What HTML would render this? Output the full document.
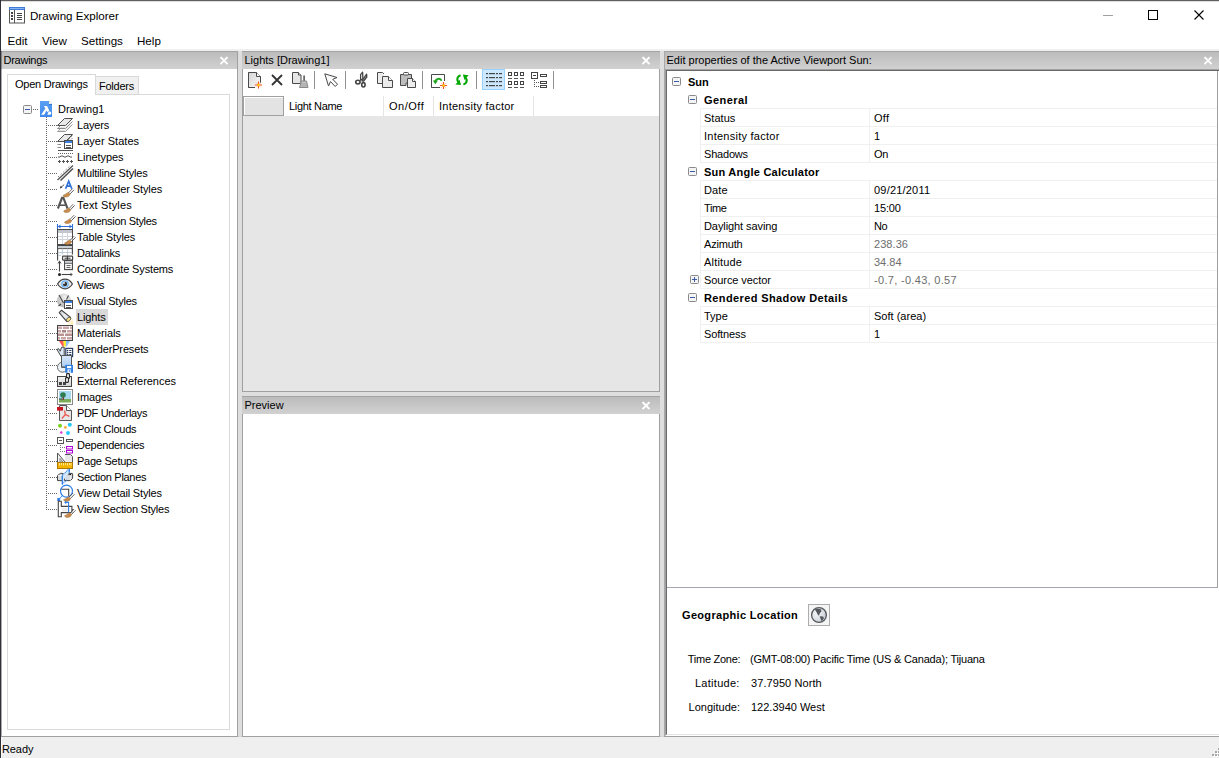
<!DOCTYPE html>
<html><head><meta charset="utf-8"><style>
*{margin:0;padding:0;box-sizing:border-box}
html,body{width:1219px;height:758px;overflow:hidden;background:#fff}
body{position:relative;font-family:"Liberation Sans",sans-serif;font-size:11px;color:#000}
.a{position:absolute}
.t{position:absolute;white-space:pre;line-height:16px}
.b{font-weight:bold}
.hdr{position:absolute;height:18px;border-top:1px solid #a3a3a3;background:linear-gradient(#bcbcbc,#d1d1d1)}
.hdr .t{left:2.5px;top:0px}
svg{position:absolute;overflow:visible}
</style></head><body>
<div class="a" style="left:0px;top:0px;width:1219px;height:1px;background:#606060"></div>
<div class="a" style="left:0px;top:1px;width:1219px;height:1px;background:#dcdcdc"></div>
<div class="a" style="left:0px;top:0px;width:1px;height:758px;background:#2e3236"></div>
<svg style="left:9px;top:7px" width="16" height="17" viewBox="0 0 16 17">
<rect x="0.5" y="0.5" width="15" height="15.5" fill="#fff" stroke="#555"/>
<rect x="0" y="0" width="16" height="3" fill="#3d7bd6"/>
<rect x="1" y="1" width="14" height="1" fill="#8ab4f0"/>
<line x1="5.5" y1="3" x2="5.5" y2="16" stroke="#555"/>
<rect x="2" y="5" width="2" height="2" fill="#444"/><rect x="2" y="8" width="2" height="2" fill="#444"/><rect x="2" y="11" width="2" height="2" fill="#444"/>
<rect x="8" y="6" width="5" height="1" fill="#444"/><rect x="8" y="8" width="5" height="1" fill="#444"/><rect x="8" y="10" width="5" height="1" fill="#444"/><rect x="8" y="12" width="5" height="1" fill="#444"/>
</svg>
<div class="t" style="left:30px;top:8px;font-size:11.6px">Drawing Explorer</div>
<div class="a" style="left:1103px;top:15px;width:10px;height:1px;background:#a0a0a0"></div>
<div class="a" style="left:1148px;top:10px;width:10px;height:10px;border:1px solid #000"></div>
<svg style="left:1194px;top:10px" width="10" height="10"><path d="M0.5 0.5L9.5 9.5M9.5 0.5L0.5 9.5" stroke="#000" stroke-width="1.1"/></svg>
<div class="t" style="left:7.5px;top:33px;font-size:11.6px">Edit</div>
<div class="t" style="left:42px;top:33px;font-size:11.6px">View</div>
<div class="t" style="left:81px;top:33px;font-size:11.6px">Settings</div>
<div class="t" style="left:137px;top:33px;font-size:11.6px">Help</div>
<div class="a" style="left:1px;top:49px;width:1218px;height:2px;background:#f0f0f0"></div>
<div class="a" style="left:1px;top:51px;width:1218px;height:685px;background:#dedede"></div>
<div class="a" style="left:1px;top:737px;width:1218px;height:21px;background:#efefef"></div>
<div class="a" style="left:1px;top:737px;width:1px;height:21px;background:#f8f8f8"></div>
<div class="a" style="left:1213px;top:755px;width:2px;height:2px;background:#fff"></div>
<div class="a" style="left:1212px;top:754px;width:2px;height:2px;background:#a8a8a8"></div>
<div class="a" style="left:1216px;top:755px;width:2px;height:2px;background:#fff"></div>
<div class="a" style="left:1215px;top:754px;width:2px;height:2px;background:#a8a8a8"></div>
<div class="a" style="left:1219px;top:755px;width:2px;height:2px;background:#fff"></div>
<div class="a" style="left:1218px;top:754px;width:2px;height:2px;background:#a8a8a8"></div>
<div class="a" style="left:1216px;top:752px;width:2px;height:2px;background:#fff"></div>
<div class="a" style="left:1215px;top:751px;width:2px;height:2px;background:#a8a8a8"></div>
<div class="a" style="left:1219px;top:752px;width:2px;height:2px;background:#fff"></div>
<div class="a" style="left:1218px;top:751px;width:2px;height:2px;background:#a8a8a8"></div>
<div class="a" style="left:1219px;top:749px;width:2px;height:2px;background:#fff"></div>
<div class="a" style="left:1218px;top:748px;width:2px;height:2px;background:#a8a8a8"></div>
<div class="t" style="left:2px;top:741px;letter-spacing:-0.1px">Ready</div>
<div class="a" style="left:1px;top:51px;width:237px;height:685px;background:#fff;border-right:1px solid #a0a0a0"></div>
<div class="hdr" style="left:1px;top:51px;width:236px"><div class="t" style="letter-spacing:-0.25px">Drawings</div></div>
<svg style="left:220px;top:57px" width="8" height="8" viewBox="0 0 8 8"><path d="M1.2 0.8L6.8 6.4M6.8 0.8L1.2 6.4" stroke="#fff" stroke-width="2" stroke-linecap="square"/></svg>
<div class="a" style="left:7px;top:94px;width:223px;height:636px;border:1px solid #d9d9d9;background:#fff"></div>
<div class="a" style="left:95px;top:76px;width:44px;height:19px;border:1px solid #d9d9d9;background:#f0f0f0"></div>
<div class="a" style="left:7px;top:74px;width:89px;height:21px;border:1px solid #d9d9d9;border-bottom:none;background:#fff"></div>
<div class="t" style="left:15px;top:76px;letter-spacing:-0.24px">Open Drawings</div>
<div class="t" style="left:99px;top:78px;letter-spacing:-0.25px">Folders</div>
<svg style="left:23px;top:105px" width="9" height="9" viewBox="0 0 9 9"><rect x="0.5" y="0.5" width="8" height="8" rx="1" fill="#f4f4f4" stroke="#8a8a8a"/><rect x="2" y="4" width="5" height="1" fill="#3b5ba8"/></svg>
<div class="a" style="left:33px;top:109px;width:5px;height:1px;background:repeating-linear-gradient(90deg,#666 0 1px,transparent 1px 2px)"></div>
<div class="a" style="left:46px;top:117px;width:1px;height:393px;background:repeating-linear-gradient(180deg,#666 0 1px,transparent 1px 2px)"></div>
<svg style="left:40px;top:101px" width="12" height="16" viewBox="0 0 12 16"><defs><linearGradient id="dwg" x1="0" y1="0" x2="0" y2="1"><stop offset="0" stop-color="#5b9ff2"/><stop offset="1" stop-color="#3f88ec"/></linearGradient></defs><path d="M0 0H9L12 3V16H0Z" fill="url(#dwg)"/><path d="M9 0L12 3H9Z" fill="#f4f0e6"/><rect x="9" y="3" width="3" height="1" fill="#2f78e0"/><path d="M3.9 5H7L9.3 9.6L7.6 11.2L6.4 9.4L4.3 13.8H1.1L5.4 7.6Z" fill="#fff"/><path d="M7.4 13.8L8.6 10.6H10C11.6 10.8 11.6 13.8 10 13.8Z" fill="#fff"/></svg>
<div class="t" style="left:58px;top:101px;">Drawing1</div>
<div class="a" style="left:47px;top:125px;width:10px;height:1px;background:repeating-linear-gradient(90deg,transparent 0 1px,#666 1px 2px)"></div>
<svg style="left:57px;top:117px" width="16" height="16" viewBox="0 0 16 16"><path d="M0.5 11.5L3 9M0.5 11.5H8.5L15.5 4.5" fill="none" stroke="#8a8a8a"/><path d="M0.5 14.5L3 12M0.5 14.5H8.5L15.5 7.5" fill="none" stroke="#9a9a9a"/><path d="M1.5 13.5H8L14 7.5M1.5 10.5H8L14 4.5" fill="none" stroke="#e0e0e0"/><path d="M7.5 1.5H15.5L8.5 8.5H0.5Z" fill="#e8e8e8" stroke="#505050"/></svg>
<div class="t" style="left:77px;top:117px;letter-spacing:-0.14px">Layers</div>
<div class="a" style="left:47px;top:141px;width:10px;height:1px;background:repeating-linear-gradient(90deg,transparent 0 1px,#666 1px 2px)"></div>
<svg style="left:57px;top:133px" width="16" height="16" viewBox="0 0 16 16"><path d="M7.5 1.5H15.5L8.5 8.5H0.5Z" fill="#e8e8e8" stroke="#505050"/><path fill="none" d="M11 7L15.5 2.5M13 7.5L15.5 5" stroke="#505050" stroke-dasharray="1 1"/><path fill="none" d="M0.5 11.5H4M0.5 14.5H4" stroke="#8a8a8a"/><rect x="7.5" y="7.5" width="8" height="8" fill="#fff" stroke="#4a4a4a"/><rect x="8" y="8" width="7" height="2" fill="#3b82e0"/><rect x="9" y="12" width="5" height="1" fill="#555"/><rect x="9" y="14" width="5" height="1" fill="#555"/></svg>
<div class="t" style="left:77px;top:133px;letter-spacing:0.027px">Layer States</div>
<div class="a" style="left:47px;top:157px;width:10px;height:1px;background:repeating-linear-gradient(90deg,transparent 0 1px,#666 1px 2px)"></div>
<svg style="left:57px;top:149px" width="16" height="16" viewBox="0 0 16 16"><rect x="1" y="1" width="15" height="1" fill="#555"/><rect x="1" y="4" width="1" height="1" fill="#666"/><rect x="3" y="4" width="1" height="1" fill="#666"/><rect x="5" y="4" width="1" height="1" fill="#666"/><rect x="7" y="4" width="1" height="1" fill="#666"/><rect x="9" y="4" width="1" height="1" fill="#666"/><rect x="11" y="4" width="1" height="1" fill="#666"/><rect x="13" y="4" width="1" height="1" fill="#666"/><rect x="15" y="4" width="1" height="1" fill="#666"/><path d="M1 8H3L4 7H6L7 8H9L10 7H12L13 8H15" fill="none" stroke="#555" stroke-width="1"/><rect x="1.0" y="12" width="3" height="1" fill="#555"/><rect x="2.0" y="11" width="1" height="3" fill="#555"/><rect x="5.0" y="12" width="3" height="1" fill="#555"/><rect x="6.0" y="11" width="1" height="3" fill="#555"/><rect x="9.0" y="12" width="3" height="1" fill="#555"/><rect x="10.0" y="11" width="1" height="3" fill="#555"/><rect x="13.0" y="12" width="3" height="1" fill="#555"/><rect x="14.0" y="11" width="1" height="3" fill="#555"/></svg>
<div class="t" style="left:77px;top:149px;letter-spacing:-0.062px">Linetypes</div>
<div class="a" style="left:47px;top:173px;width:10px;height:1px;background:repeating-linear-gradient(90deg,transparent 0 1px,#666 1px 2px)"></div>
<svg style="left:57px;top:165px" width="16" height="16" viewBox="0 0 16 16"><path fill="none" d="M0.5 15L16 0.5" stroke="#505050" stroke-width="1.2"/><path fill="none" d="M3.5 15.5L16 3.5" stroke="#505050" stroke-width="1.6"/><path fill="none" d="M1 12L14 0" stroke="#888" stroke-dasharray="1.5 2"/></svg>
<div class="t" style="left:77px;top:165px;letter-spacing:-0.18px">Multiline Styles</div>
<div class="a" style="left:47px;top:189px;width:10px;height:1px;background:repeating-linear-gradient(90deg,transparent 0 1px,#666 1px 2px)"></div>
<svg style="left:57px;top:181px" width="16" height="16" viewBox="0 0 16 16"><path d="M8.6 7.7L11.7 0.2L14.8 7.7M9.6 5.2H13.7" fill="none" stroke="#2f6fd8" stroke-width="1.7"/><path d="M3.5 6.8L7.2 3.6" stroke="#444" stroke-width="0.9" fill="none"/><path d="M2.8 7.5L3.6 4.8L5.4 6.6Z" fill="#444"/><g transform="translate(10,13.4) scale(1.0)"><path d="M1.4 -1.4L5.6 -5.8M2.8 -0.2L7 -4.6" stroke="#4a4a4a" stroke-width="0.9" fill="none"/><path d="M2.1 -0.8L6.3 -5.2" stroke="#fff" stroke-width="0.8" fill="none"/><path d="M-4 1C-2.6 0.4 -0.6 -0.8 1 -2L3 -0.4C2.8 1.8 0.8 2.6 -1.2 2.6C-2.6 2.6 -3.6 2 -4 1Z" fill="#c88c4c" stroke="#9c6a34" stroke-width="0.5"/></g></svg>
<div class="t" style="left:77px;top:181px;letter-spacing:-0.094px">Multileader Styles</div>
<div class="a" style="left:47px;top:205px;width:10px;height:1px;background:repeating-linear-gradient(90deg,transparent 0 1px,#666 1px 2px)"></div>
<svg style="left:57px;top:197px" width="16" height="16" viewBox="0 0 16 16"><path d="M0.9 11.5L5 0.8H6.4L10.5 11.5" fill="none" stroke="#555" stroke-width="2.1"/><path d="M2.8 8.2H8.6" stroke="#555" stroke-width="1.6"/><g transform="translate(10.6,13) scale(1.0)"><path d="M1.4 -1.4L5.6 -5.8M2.8 -0.2L7 -4.6" stroke="#4a4a4a" stroke-width="0.9" fill="none"/><path d="M2.1 -0.8L6.3 -5.2" stroke="#fff" stroke-width="0.8" fill="none"/><path d="M-4 1C-2.6 0.4 -0.6 -0.8 1 -2L3 -0.4C2.8 1.8 0.8 2.6 -1.2 2.6C-2.6 2.6 -3.6 2 -4 1Z" fill="#c88c4c" stroke="#9c6a34" stroke-width="0.5"/></g></svg>
<div class="t" style="left:77px;top:197px;letter-spacing:0.15px">Text Styles</div>
<div class="a" style="left:47px;top:221px;width:10px;height:1px;background:repeating-linear-gradient(90deg,transparent 0 1px,#666 1px 2px)"></div>
<svg style="left:57px;top:213px" width="16" height="16" viewBox="0 0 16 16"><g transform="translate(11.5,8) scale(1.0)"><path d="M1.4 -1.4L5.6 -5.8M2.8 -0.2L7 -4.6" stroke="#4a4a4a" stroke-width="0.9" fill="none"/><path d="M2.1 -0.8L6.3 -5.2" stroke="#fff" stroke-width="0.8" fill="none"/><path d="M-4 1C-2.6 0.4 -0.6 -0.8 1 -2L3 -0.4C2.8 1.8 0.8 2.6 -1.2 2.6C-2.6 2.6 -3.6 2 -4 1Z" fill="#c88c4c" stroke="#9c6a34" stroke-width="0.5"/></g><path fill="none" d="M0.5 11V16M15.5 11V16M1 13.5H15" stroke="#2f6fd8" stroke-width="1.1"/><path d="M1 13.5L3.5 11.5V15.5Z M15 13.5L12.5 11.5V15.5Z" fill="#2f6fd8"/></svg>
<div class="t" style="left:77px;top:213px;letter-spacing:-0.333px">Dimension Styles</div>
<div class="a" style="left:47px;top:237px;width:10px;height:1px;background:repeating-linear-gradient(90deg,transparent 0 1px,#666 1px 2px)"></div>
<svg style="left:57px;top:229px" width="16" height="16" viewBox="0 0 16 16"><rect x="0.5" y="0.5" width="15" height="15" fill="#fff" stroke="#4a4a4a"/><rect x="1" y="1" width="14" height="3" fill="#c2c6cc"/><path fill="none" d="M1 7.5H15M1 10.5H15M5.5 4V15M10.5 4V15" stroke="#cfd6de"/><g transform="translate(11.5,13) scale(1.0)"><path d="M1.4 -1.4L5.6 -5.8M2.8 -0.2L7 -4.6" stroke="#4a4a4a" stroke-width="0.9" fill="none"/><path d="M2.1 -0.8L6.3 -5.2" stroke="#fff" stroke-width="0.8" fill="none"/><path d="M-4 1C-2.6 0.4 -0.6 -0.8 1 -2L3 -0.4C2.8 1.8 0.8 2.6 -1.2 2.6C-2.6 2.6 -3.6 2 -4 1Z" fill="#c88c4c" stroke="#9c6a34" stroke-width="0.5"/></g></svg>
<div class="t" style="left:77px;top:229px;letter-spacing:-0.091px">Table Styles</div>
<div class="a" style="left:47px;top:253px;width:10px;height:1px;background:repeating-linear-gradient(90deg,transparent 0 1px,#666 1px 2px)"></div>
<svg style="left:57px;top:245px" width="16" height="16" viewBox="0 0 16 16"><path d="M0.6 15.4V0.6H15.4V9.4" fill="#fff" stroke="#444" stroke-width="1.1"/><rect x="1.1" y="1.1" width="13.8" height="2.4" fill="#c9d1d6"/><path d="M1 3.6H15" stroke="#444" stroke-width="0.9"/><path d="M1 7.5H15M5.3 3.6V9.6M10.5 3.6V9.6M1 10.5H4" stroke="#b9c6d2" stroke-width="0.9"/><rect x="5.6" y="11.2" width="5.2" height="4" rx="0.6" fill="#fff" stroke="#444" stroke-width="1.2"/><rect x="10.4" y="11.2" width="5.2" height="4" rx="0.6" fill="#fff" stroke="#444" stroke-width="1.2"/><path d="M7.5 13.2H13.5" stroke="#444" stroke-width="1.1"/></svg>
<div class="t" style="left:77px;top:245px;letter-spacing:-0.237px">Datalinks</div>
<div class="a" style="left:47px;top:269px;width:10px;height:1px;background:repeating-linear-gradient(90deg,transparent 0 1px,#666 1px 2px)"></div>
<svg style="left:57px;top:261px" width="16" height="16" viewBox="0 0 16 16"><rect x="7.6" y="-0.6" width="7.8" height="9.2" fill="#fff" stroke="#444" stroke-width="1.1"/><rect x="8.2" y="0" width="6.6" height="2" fill="#c9d1d6"/><path d="M8 2.4H15" stroke="#444" stroke-width="0.8"/><path d="M9.5 4.6H13.5M9.5 6.6H13.5" stroke="#444" stroke-width="0.9"/><path d="M2.5 10.5V0.5" stroke="#444" stroke-width="1.1"/><path d="M0.3 2.8L2.5 -0.4L4.7 2.8L2.5 1.8Z" fill="#444"/><circle cx="2.5" cy="13.5" r="1.5" fill="#222"/><path d="M4.6 13.5H14" stroke="#444" stroke-width="1.1"/><path d="M13.2 11.6L15.8 13.5L13.2 15.4L14 13.5Z" fill="#444"/></svg>
<div class="t" style="left:77px;top:261px;letter-spacing:-0.159px">Coordinate Systems</div>
<div class="a" style="left:47px;top:285px;width:10px;height:1px;background:repeating-linear-gradient(90deg,transparent 0 1px,#666 1px 2px)"></div>
<svg style="left:57px;top:277px" width="16" height="16" viewBox="0 0 16 16"><path d="M0.6 7C3 3.2 5.5 2.2 8 2.2C10.5 2.2 13 3.2 15.4 7C13 10.8 10.5 11.8 8 11.8C5.5 11.8 3 10.8 0.6 7Z" fill="#f4f4f4" stroke="#444" stroke-width="1.3"/><path d="M2.5 7L4 5.5V8.5Z M13.5 7L12 5.5V8.5Z" fill="#ddd"/><circle cx="8" cy="7" r="3.2" fill="#fff" stroke="#6ab0f5" stroke-width="1.3"/><circle cx="8" cy="7" r="2.2" fill="#333"/><circle cx="7" cy="6" r="0.9" fill="#fff"/></svg>
<div class="t" style="left:77px;top:277px;letter-spacing:-0.425px">Views</div>
<div class="a" style="left:47px;top:301px;width:10px;height:1px;background:repeating-linear-gradient(90deg,transparent 0 1px,#666 1px 2px)"></div>
<svg style="left:57px;top:293px" width="16" height="16" viewBox="0 0 16 16"><defs><radialGradient id="vsg" cx="0.6" cy="0.3" r="0.9"><stop offset="0" stop-color="#f2f2f2"/><stop offset="1" stop-color="#a8a8a8"/></radialGradient></defs><circle cx="7" cy="7.5" r="7" fill="url(#vsg)"/><path d="M2 2L6.5 10M11.5 2.5L9.5 6.5M1.5 13L4 11" stroke="#444" stroke-width="1.1" fill="none"/><rect x="7.5" y="7.5" width="8" height="8" fill="#fff" stroke="#4a4a4a"/><rect x="8" y="8" width="7" height="2" fill="#3b82e0"/><rect x="9" y="12" width="5" height="1" fill="#555"/><rect x="9" y="14" width="5" height="1" fill="#555"/></svg>
<div class="t" style="left:77px;top:293px;letter-spacing:-0.225px">Visual Styles</div>
<div class="a" style="left:47px;top:317px;width:10px;height:1px;background:repeating-linear-gradient(90deg,transparent 0 1px,#666 1px 2px)"></div>
<div class="a" style="left:76px;top:309px;width:32px;height:16px;background:#d9d9d9"></div>
<svg style="left:57px;top:309px" width="16" height="16" viewBox="0 0 16 16"><defs><linearGradient id="lg" x1="0" y1="0" x2="1" y2="1"><stop offset="0" stop-color="#c8ccd0"/><stop offset="0.5" stop-color="#eef0f2"/><stop offset="1" stop-color="#b8bcc0"/></linearGradient><linearGradient id="lgg" x1="0" y1="0" x2="1" y2="1"><stop offset="0" stop-color="#fff" stop-opacity="0"/><stop offset="1" stop-color="#fde08a"/></linearGradient></defs><rect x="10" y="9" width="6" height="6.5" fill="url(#lgg)"/><path d="M4.5 1.2L2.2 3.6L9.6 12.4L13.6 8.4Z" fill="url(#lg)" stroke="#444" stroke-width="1.1" stroke-linejoin="round"/><ellipse cx="11.6" cy="10.4" rx="2.6" ry="1.6" transform="rotate(-45 11.6 10.4)" fill="#ffe57a" stroke="#555" stroke-width="0.9"/></svg>
<div class="t" style="left:77px;top:309px;letter-spacing:-0.14px">Lights</div>
<div class="a" style="left:47px;top:333px;width:10px;height:1px;background:repeating-linear-gradient(90deg,transparent 0 1px,#666 1px 2px)"></div>
<svg style="left:57px;top:325px" width="16" height="16" viewBox="0 0 16 16"><rect x="0.5" y="0.5" width="15" height="15" fill="#fff" stroke="#444"/><g fill="#c9a6a6"><rect x="1" y="1.5" width="4" height="2.5"/><rect x="6" y="1.5" width="6" height="2.5"/><rect x="13" y="1.5" width="2" height="2.5"/><rect x="1" y="5" width="3" height="2.5"/><rect x="5" y="5" width="4" height="2.5" fill="#a98282"/><rect x="10" y="5" width="5" height="2.5"/><rect x="1" y="8.5" width="6" height="2.5" fill="#b99292"/><rect x="8" y="8.5" width="7" height="2.5" fill="#b99292"/><rect x="1" y="12" width="2" height="2.5"/><rect x="4" y="12" width="5" height="2.5"/><rect x="10" y="12" width="5" height="2.5"/></g></svg>
<div class="t" style="left:77px;top:325px;letter-spacing:-0.112px">Materials</div>
<div class="a" style="left:47px;top:349px;width:10px;height:1px;background:repeating-linear-gradient(90deg,transparent 0 1px,#666 1px 2px)"></div>
<svg style="left:57px;top:341px" width="16" height="16" viewBox="0 0 16 16"><path d="M2 0H6.6L7 5.6L5.6 5.6Z" fill="#ff5a5a"/><path d="M6.4 0H9.2L8.9 5.6H6.8Z" fill="#fff12a"/><path d="M9 0H13L9.8 5.6H8.8Z" fill="#8cc0fa"/><path d="M0 8.5L1.6 7.6L3.2 10.2L4.6 6.2H7.2V15.6H4.2Z" fill="#dce9f8" stroke="#444" stroke-width="1" stroke-linejoin="round"/><rect x="8.8" y="7.4" width="6.8" height="8.2" fill="#fff" stroke="#2c4066" stroke-width="1.2"/><g fill="#2c4066"><circle cx="10.6" cy="9.5" r="0.8"/><circle cx="10.6" cy="11.5" r="0.8"/><circle cx="10.6" cy="13.5" r="0.8"/><rect x="12.2" y="9" width="2.2" height="1"/><rect x="12.2" y="11" width="2.2" height="1"/><rect x="12.2" y="13" width="2.2" height="1"/></g></svg>
<div class="t" style="left:77px;top:341px;letter-spacing:-0.15px">RenderPresets</div>
<div class="a" style="left:47px;top:365px;width:10px;height:1px;background:repeating-linear-gradient(90deg,transparent 0 1px,#666 1px 2px)"></div>
<svg style="left:57px;top:357px" width="16" height="16" viewBox="0 0 16 16"><defs><linearGradient id="blg" x1="0" y1="0" x2="0" y2="1"><stop offset="0" stop-color="#d8e8fb"/><stop offset="1" stop-color="#a9ccf4"/></linearGradient></defs><path d="M5 5.2A5 5 0 1 0 10.5 10.2" fill="#eef4fb" stroke="#666"/><path d="M4.5 -1.5H14.5V10.2H4.5Z" fill="url(#blg)" stroke="#555"/><path d="M4.5 10.2H9" stroke="#555"/><rect x="8.2" y="7.9" width="7.8" height="7.9" fill="#2f7fe6"/><rect x="10" y="9" width="4.2" height="2.2" fill="#fff"/><rect x="10.5" y="12.3" width="3.2" height="3.5" fill="#fff"/><rect x="11.8" y="12.8" width="1" height="2" fill="#2f7fe6"/></svg>
<div class="t" style="left:77px;top:357px;letter-spacing:-0.54px">Blocks</div>
<div class="a" style="left:47px;top:381px;width:10px;height:1px;background:repeating-linear-gradient(90deg,transparent 0 1px,#666 1px 2px)"></div>
<svg style="left:57px;top:373px" width="16" height="16" viewBox="0 0 16 16"><defs><linearGradient id="xrg" x1="0" y1="0" x2="0" y2="1"><stop offset="0" stop-color="#f4f4f4"/><stop offset="1" stop-color="#d4d4d4"/></linearGradient></defs><rect x="0.5" y="3.5" width="14" height="10" fill="url(#xrg)" stroke="#444"/><rect x="2" y="9" width="3" height="3" fill="#444"/><rect x="6" y="9" width="3" height="3" fill="#444"/><rect x="9.6" y="0.6" width="2.8" height="5" rx="0.8" fill="#fff" stroke="#222" stroke-width="1.1"/><rect x="8.6" y="4.6" width="2.8" height="4.8" rx="0.8" fill="#fff" stroke="#222" stroke-width="1.1"/></svg>
<div class="t" style="left:77px;top:373px;letter-spacing:-0.039px">External References</div>
<div class="a" style="left:47px;top:397px;width:10px;height:1px;background:repeating-linear-gradient(90deg,transparent 0 1px,#666 1px 2px)"></div>
<svg style="left:57px;top:389px" width="16" height="16" viewBox="0 0 16 16"><rect x="0.5" y="0.5" width="15" height="15" fill="#fff" stroke="#888"/><rect x="2" y="2" width="12" height="8" fill="#a8d8f0"/><rect x="2" y="10" width="12" height="3.5" fill="#7cab57"/><circle cx="6" cy="6" r="2.8" fill="#2e7d4f"/><rect x="5.5" y="8" width="1.5" height="3" fill="#7a3a3a"/><rect x="2" y="9.5" width="3" height="1" fill="#2e4a5a"/></svg>
<div class="t" style="left:77px;top:389px;letter-spacing:-0.14px">Images</div>
<div class="a" style="left:47px;top:413px;width:10px;height:1px;background:repeating-linear-gradient(90deg,transparent 0 1px,#666 1px 2px)"></div>
<svg style="left:57px;top:405px" width="16" height="16" viewBox="0 0 16 16"><path d="M2.5 0.5H9.5L14.5 5.5V15.5H2.5Z" fill="#e6e6e6" stroke="#555"/><path d="M9.5 0.5V5.5H14.5" fill="#fff" stroke="#555"/><rect x="0" y="2" width="6" height="3.6" fill="#c8141e"/><path d="M7.6 5.5L8.3 9.5L4.8 13.6M8.3 9.5L12.4 11.4" fill="none" stroke="#f0504a" stroke-width="1.3"/></svg>
<div class="t" style="left:77px;top:405px;letter-spacing:-0.342px">PDF Underlays</div>
<div class="a" style="left:47px;top:429px;width:10px;height:1px;background:repeating-linear-gradient(90deg,transparent 0 1px,#666 1px 2px)"></div>
<svg style="left:57px;top:421px" width="16" height="16" viewBox="0 0 16 16"><circle cx="3" cy="4.7" r="2" fill="#7ed321"/><circle cx="12.8" cy="3.8" r="2" fill="#22c8fa"/><circle cx="8.4" cy="6.4" r="1.3" fill="#f5a623"/><circle cx="4.3" cy="11.5" r="1.2" fill="#ea2ad6"/><circle cx="11" cy="12" r="1.9" fill="#22c8fa"/></svg>
<div class="t" style="left:77px;top:421px;letter-spacing:-0.255px">Point Clouds</div>
<div class="a" style="left:47px;top:445px;width:10px;height:1px;background:repeating-linear-gradient(90deg,transparent 0 1px,#666 1px 2px)"></div>
<svg style="left:57px;top:437px" width="16" height="16" viewBox="0 0 16 16"><rect x="0.5" y="0.5" width="6" height="6" fill="#fff" stroke="#555"/><rect x="2" y="3" width="3" height="1" fill="#555"/><rect x="9.5" y="2.5" width="6" height="2" fill="#fff" stroke="#555"/><rect x="3" y="8" width="1" height="1" fill="#777"/><rect x="3" y="10" width="1" height="1" fill="#777"/><rect x="3" y="12" width="1" height="1" fill="#777"/><rect x="3" y="14" width="1" height="1" fill="#777"/><rect x="5" y="10" width="1" height="1" fill="#777"/><rect x="5" y="14" width="1" height="1" fill="#777"/><rect x="7" y="10" width="1" height="1" fill="#777"/><rect x="7" y="14" width="1" height="1" fill="#777"/><rect x="9.5" y="9.5" width="6" height="2.5" fill="#fff" stroke="#b000d8"/><rect x="9.5" y="13.5" width="6" height="2.5" fill="#fff" stroke="#b000d8"/></svg>
<div class="t" style="left:77px;top:437px;letter-spacing:-0.255px">Dependencies</div>
<div class="a" style="left:47px;top:461px;width:10px;height:1px;background:repeating-linear-gradient(90deg,transparent 0 1px,#666 1px 2px)"></div>
<svg style="left:57px;top:453px" width="16" height="16" viewBox="0 0 16 16"><path d="M0.5 0L8 9V9.5H0.5Z" fill="#f5f5f5" stroke="#555"/><path d="M3 5.5V9H6Z" fill="#fff" stroke="#555" stroke-width="0.7"/><path d="M8 1.5H13.5L15.5 3.5V9.5H8" fill="#e8e8e8" stroke="#555"/><rect x="0.5" y="9.5" width="15" height="6" fill="#f5b400" stroke="#b07a00"/><path fill="none" d="M2.5 10V12.5M4.5 10V12M6.5 10V12.5M8.5 10V12M10.5 10V12.5M12.5 10V12M14 10V12.5" stroke="#fff3b0" stroke-width="0.8"/></svg>
<div class="t" style="left:77px;top:453px;letter-spacing:-0.26px">Page Setups</div>
<div class="a" style="left:47px;top:477px;width:10px;height:1px;background:repeating-linear-gradient(90deg,transparent 0 1px,#666 1px 2px)"></div>
<svg style="left:57px;top:469px" width="16" height="16" viewBox="0 0 16 16"><path d="M0.5 6.6L3.4 4.4H6V11.6H0.5Z" fill="#d9dde1" stroke="#444" stroke-width="1"/><path d="M1 6.6H5.5" stroke="#f4f4f4"/><path d="M7.4 6.6L10 4.4H15.6V9.4L13.4 11.6H7.4Z" fill="#d9dde1" stroke="#444" stroke-width="1"/><path d="M8 6.6H13.4L15.4 4.6M13.4 6.6V11.4" stroke="#f0f0f0" stroke-width="0.8"/><path d="M5.3 15.4V6.4L12.2 -0.2V3.8L7 10.2V13.2Z" fill="#d3e7fb"/><path d="M5.3 15.4V6.4" stroke="#2f7fe6" stroke-width="1.3"/><path d="M5.3 6.4L12.2 -0.2" stroke="#2f7fe6" stroke-width="1.1" stroke-dasharray="1 0.8"/><path d="M12.3 -0.2V3.8" stroke="#2f7fe6" stroke-width="1.3"/><path d="M5.3 15.4L9.8 11" stroke="#2f7fe6" stroke-width="1.1" stroke-dasharray="1 0.8"/></svg>
<div class="t" style="left:77px;top:469px;letter-spacing:-0.3px">Section Planes</div>
<div class="a" style="left:47px;top:493px;width:10px;height:1px;background:repeating-linear-gradient(90deg,transparent 0 1px,#666 1px 2px)"></div>
<svg style="left:57px;top:485px" width="16" height="16" viewBox="0 0 16 16"><circle cx="9.5" cy="6.1" r="6" fill="none" stroke="#2f7fe6" stroke-width="1.2"/><path d="M4.3 4.2H11.7V11" fill="none" stroke="#444" stroke-width="1.1"/><path d="M5 11.2L2.6 13.6" stroke="#2f7fe6" stroke-width="1.1" stroke-dasharray="1 0.8"/><rect x="0.3" y="13" width="2.8" height="3" fill="#2f7fe6"/><g transform="translate(10.5,13.8) scale(1.0)"><path d="M1.4 -1.4L5.6 -5.8M2.8 -0.2L7 -4.6" stroke="#4a4a4a" stroke-width="0.9" fill="none"/><path d="M2.1 -0.8L6.3 -5.2" stroke="#fff" stroke-width="0.8" fill="none"/><path d="M-4 1C-2.6 0.4 -0.6 -0.8 1 -2L3 -0.4C2.8 1.8 0.8 2.6 -1.2 2.6C-2.6 2.6 -3.6 2 -4 1Z" fill="#c88c4c" stroke="#9c6a34" stroke-width="0.5"/></g></svg>
<div class="t" style="left:77px;top:485px;letter-spacing:-0.171px">View Detail Styles</div>
<div class="a" style="left:47px;top:509px;width:10px;height:1px;background:repeating-linear-gradient(90deg,transparent 0 1px,#666 1px 2px)"></div>
<svg style="left:57px;top:501px" width="16" height="16" viewBox="0 0 16 16"><path d="M1.3 0.3H4.3V5.4H14.9V11.6H4.3V15.7H1.3Z" fill="#fff" stroke="#444" stroke-width="1.1"/><rect x="4.6" y="7" width="7" height="3.5" fill="#eeeeee"/><path d="M11.6 11.6V1.4H8.4" fill="none" stroke="#2f7fe6" stroke-width="1.1"/><path d="M7.2 1.4L9.2 -0.4V3.2Z" fill="#2f7fe6"/><path d="M15 8L16 9L15 10" fill="none" stroke="#444" stroke-width="0.8"/><g transform="translate(11.5,13.8) scale(1.0)"><path d="M1.4 -1.4L5.6 -5.8M2.8 -0.2L7 -4.6" stroke="#4a4a4a" stroke-width="0.9" fill="none"/><path d="M2.1 -0.8L6.3 -5.2" stroke="#fff" stroke-width="0.8" fill="none"/><path d="M-4 1C-2.6 0.4 -0.6 -0.8 1 -2L3 -0.4C2.8 1.8 0.8 2.6 -1.2 2.6C-2.6 2.6 -3.6 2 -4 1Z" fill="#c88c4c" stroke="#9c6a34" stroke-width="0.5"/></g></svg>
<div class="t" style="left:77px;top:501px;letter-spacing:-0.217px">View Section Styles</div>
<div class="a" style="left:242px;top:51px;width:418px;height:341px;background:#e6e6e6;border:1px solid #a0a0a0;border-top:none"></div>
<div class="hdr" style="left:242px;top:51px;width:418px"><div class="t">Lights [Drawing1]</div></div>
<svg style="left:642px;top:57px" width="8" height="8" viewBox="0 0 8 8"><path d="M1.2 0.8L6.8 6.4M6.8 0.8L1.2 6.4" stroke="#fff" stroke-width="2" stroke-linecap="square"/></svg>
<div class="a" style="left:243px;top:69px;width:416px;height:27px;background:#fff"></div>
<div class="a" style="left:243px;top:96px;width:416px;height:20px;background:#fff"></div>
<div class="a" style="left:314px;top:71px;width:1px;height:18px;background:#8f8f8f"></div>
<div class="a" style="left:345px;top:71px;width:1px;height:18px;background:#8f8f8f"></div>
<div class="a" style="left:422px;top:71px;width:1px;height:18px;background:#8f8f8f"></div>
<div class="a" style="left:476px;top:71px;width:1px;height:18px;background:#8f8f8f"></div>
<div class="a" style="left:553px;top:71px;width:1px;height:18px;background:#8f8f8f"></div>
<svg style="left:248px;top:72px" width="16" height="17" viewBox="0 0 16 17"><defs><linearGradient id="dg" x1="0" y1="0" x2="1" y2="1"><stop offset="0" stop-color="#d5d5d5"/><stop offset="1" stop-color="#fbfbfb"/></linearGradient></defs><path d="M0.5 0.5H8.5L12.5 4.5V11M7 15.5H0.5Z" fill="url(#dg)" stroke="#4a4a4a"/><path d="M0.5 0.5H8.5L12.5 4.5V11L7 15.5H0.5Z" fill="url(#dg)"/><path d="M0.5 15.5V0.5H8.5L12.5 4.5V10.5M7 15.5H0.5" fill="none" stroke="#4a4a4a"/><path d="M8.5 0.5V4.5H12.5" fill="#fff" stroke="#4a4a4a"/><g transform="translate(10.5,13)"><path fill="none" d="M0 -3.6V3.6M-3.6 0H3.6" stroke="#f0501e" stroke-width="1.1"/><path fill="none" d="M-2.3 -2.3L2.3 2.3M2.3 -2.3L-2.3 2.3" stroke="#f0501e" stroke-width="0.7" opacity="0.55"/><circle r="1.2" fill="#ffd000"/></g></svg>
<svg style="left:271px;top:74px" width="12" height="12" viewBox="0 0 12 12"><path fill="none" d="M1 1L11 11M11 1L1 11" stroke="#333" stroke-width="1.8"/></svg>
<svg style="left:292px;top:72px" width="17" height="17" viewBox="0 0 17 17"><path d="M0.5 0.5H6.5L9 3V11.5H0.5Z" fill="#e6e6e6" stroke="#4a4a4a"/><path d="M6.5 0.5V3H9" fill="#fff" stroke="#4a4a4a"/><rect x="11.3" y="3.5" width="1.6" height="6" fill="#5a5a5a"/><path d="M9.5 9H14.5L16 15.5H7.5Z" fill="#c4c4c4" stroke="#8a8a8a"/><path d="M10 11V15M12 11V15M14 11V15" stroke="#9a9a9a" stroke-width="0.7"/></svg>
<svg style="left:324px;top:73px" width="15" height="15" viewBox="0 0 15 15"><path d="M0.8 0.8L13 4.5L8.8 6.3L13.5 11.2L11.2 13.5L6.5 8.6L4.5 13Z" fill="#fafafa" stroke="#4a4a4a" stroke-width="1" stroke-linejoin="round"/></svg>
<svg style="left:352px;top:70px" width="20" height="20" viewBox="0 0 20 20"><path d="M8.6 10.2V4.6L10.6 2.2L10.9 8.8Z" fill="#fff" stroke="#444" stroke-width="1.3" stroke-linejoin="round"/><path d="M10 10.8L14.6 4.2L14.8 7L11.6 11.2Z" fill="#d8d8d8" stroke="#444" stroke-width="1.3" stroke-linejoin="round"/><ellipse cx="5.9" cy="12.1" rx="2.2" ry="1.9" fill="none" stroke="#444" stroke-width="1.6"/><ellipse cx="11.4" cy="14.8" rx="1.7" ry="2.2" fill="none" stroke="#444" stroke-width="1.6"/></svg>
<svg style="left:377px;top:72px" width="16" height="16" viewBox="0 0 16 16"><path d="M0.5 11.5V0.5H5.5L7 2" fill="none" stroke="#4a4a4a"/><path d="M1 1H5L7 3V11H1Z" fill="#ececec"/><path fill="none" d="M0.5 11.5H5" stroke="#4a4a4a"/><path d="M5.5 4.5H11.5L15.5 8.5V15.5H5.5Z" fill="#ececec" stroke="#4a4a4a"/><path d="M11.5 4.5V8.5H15.5" fill="#fff" stroke="#4a4a4a"/></svg>
<svg style="left:400px;top:72px" width="16" height="16" viewBox="0 0 16 16"><path d="M0.5 2.5H11.5V11H6V13.5H0.5Z" fill="#bdbdbd" stroke="#4a4a4a"/><rect x="3.5" y="0.5" width="5" height="2.5" rx="1" fill="#fff" stroke="#4a4a4a"/><path d="M7.5 6.5H12.5L15.5 9.5V15.5H7.5Z" fill="#ececec" stroke="#4a4a4a"/><path d="M12.5 6.5V9.5H15.5" fill="#fff" stroke="#4a4a4a"/></svg>
<svg style="left:431px;top:74px" width="17" height="16" viewBox="0 0 17 16"><path d="M0.5 13.5V0.5H13.5V7" fill="none" stroke="#4a4a4a"/><path fill="none" d="M0.5 13.5H9" stroke="#4a4a4a"/><path fill="none" d="M0.5 13.5H9" stroke="#4a4a4a"/><path d="M4.5 7.5C4.5 4.5 9.5 3.5 10.5 6.8" fill="none" stroke="#1aa31a" stroke-width="1.8"/><path d="M1.8 6.5H7L4.3 10.2Z" fill="#1aa31a"/><g transform="translate(12.5,11.5)"><path fill="none" d="M0 -3.6V3.6M-3.6 0H3.6" stroke="#f0501e" stroke-width="1.1"/><path fill="none" d="M-2.3 -2.3L2.3 2.3M2.3 -2.3L-2.3 2.3" stroke="#f0501e" stroke-width="0.7" opacity="0.55"/><circle r="1.2" fill="#ffd000"/></g></svg>
<svg style="left:452px;top:72px" width="20" height="16" viewBox="0 0 20 16"><path d="M8.6 3.2C5.5 4 4.3 7.5 6.2 10" fill="none" stroke="#00a800" stroke-width="2.1"/><path d="M3.4 12.6L9 12.9L7.6 7.8Z" fill="#00a800"/><path d="M11.4 12.6C14.5 11.8 15.7 8.3 13.8 5.8" fill="none" stroke="#00a800" stroke-width="2.1"/><path d="M10.9 2.4L16.6 3.2L12.4 7.9Z" fill="#00a800"/></svg>
<div class="a" style="left:482px;top:69px;width:23px;height:21px;background:#cce8ff;border:1px solid #99d1ff"></div>
<svg style="left:482px;top:69px" width="23" height="21" viewBox="0 0 23 21"><rect x="4" y="4" width="2" height="1.2" fill="#444"/><rect x="7" y="4" width="6" height="1.2" fill="#444"/><rect x="14" y="4" width="2" height="1.2" fill="#444"/><rect x="17" y="4" width="3" height="1.2" fill="#444"/><rect x="4" y="5.2" width="16" height="0.8" fill="#b8c8d8" opacity="0.6"/><rect x="4" y="8" width="2" height="1.2" fill="#444"/><rect x="7" y="8" width="6" height="1.2" fill="#444"/><rect x="14" y="8" width="2" height="1.2" fill="#444"/><rect x="17" y="8" width="3" height="1.2" fill="#444"/><rect x="4" y="9.2" width="16" height="0.8" fill="#b8c8d8" opacity="0.6"/><rect x="4" y="12" width="2" height="1.2" fill="#444"/><rect x="7" y="12" width="6" height="1.2" fill="#444"/><rect x="14" y="12" width="2" height="1.2" fill="#444"/><rect x="17" y="12" width="3" height="1.2" fill="#444"/><rect x="4" y="13.2" width="16" height="0.8" fill="#b8c8d8" opacity="0.6"/><rect x="4" y="16" width="2" height="1.2" fill="#444"/><rect x="7" y="16" width="6" height="1.2" fill="#444"/><rect x="14" y="16" width="2" height="1.2" fill="#444"/><rect x="17" y="16" width="3" height="1.2" fill="#444"/><rect x="4" y="17.2" width="16" height="0.8" fill="#b8c8d8" opacity="0.6"/></svg>
<svg style="left:508px;top:69px" width="18" height="21" viewBox="0 0 18 21"><path d="M0 3h4v4h-4zM1 4v2h2v-2z" fill="#444" fill-rule="evenodd"/><rect x="0" y="9" width="4" height="1" fill="#555"/><path d="M6 3h4v4h-4zM7 4v2h2v-2z" fill="#444" fill-rule="evenodd"/><rect x="6" y="9" width="4" height="1" fill="#555"/><path d="M12 3h4v4h-4zM13 4v2h2v-2z" fill="#444" fill-rule="evenodd"/><rect x="12" y="9" width="4" height="1" fill="#555"/><path d="M0 12h4v4h-4zM1 13v2h2v-2z" fill="#444" fill-rule="evenodd"/><rect x="0" y="18" width="4" height="1" fill="#555"/><path d="M6 12h4v4h-4zM7 13v2h2v-2z" fill="#444" fill-rule="evenodd"/><rect x="6" y="18" width="4" height="1" fill="#555"/><path d="M12 12h4v4h-4zM13 13v2h2v-2z" fill="#444" fill-rule="evenodd"/><rect x="12" y="18" width="4" height="1" fill="#555"/></svg>
<svg style="left:531px;top:69px" width="17" height="21" viewBox="0 0 17 21"><path d="M0 3h7v7h-7zM1 4v5h5v-5z" fill="#444" fill-rule="evenodd"/><rect x="2" y="6" width="3" height="1" fill="#444"/><path d="M9 5h7v3h-7zM10 6v1h5v-1z" fill="#444" fill-rule="evenodd"/><path d="M9 12h7v3h-7zM10 13v1h5v-1z" fill="#444" fill-rule="evenodd"/><path d="M9 16h7v3h-7zM10 17v1h5v-1z" fill="#444" fill-rule="evenodd"/><g fill="#555"><rect x="3" y="11" width="1" height="1"/><rect x="3" y="13" width="1" height="1"/><rect x="5" y="13" width="1" height="1"/><rect x="7" y="13" width="1" height="1"/><rect x="3" y="15" width="1" height="1"/><rect x="3" y="17" width="1" height="1"/><rect x="5" y="17" width="1" height="1"/><rect x="7" y="17" width="1" height="1"/></g></svg>
<div class="a" style="left:243px;top:96px;width:41px;height:20px;background:#e3e3e3;border:1px solid #a0a0a0;box-shadow:inset 1px 1px 0 #fff"></div>
<div class="a" style="left:383px;top:96px;width:1px;height:20px;background:#e5e5e5"></div>
<div class="a" style="left:433px;top:96px;width:1px;height:20px;background:#e5e5e5"></div>
<div class="a" style="left:533px;top:96px;width:1px;height:20px;background:#e5e5e5"></div>
<div class="t" style="left:289px;top:98px;letter-spacing:-0.31px">Light Name</div>
<div class="t" style="left:389px;top:98px;letter-spacing:0.5px">On/Off</div>
<div class="t" style="left:439px;top:98px;letter-spacing:0.25px">Intensity factor</div>
<div class="a" style="left:242px;top:396px;width:418px;height:341px;background:#fff;border:1px solid #a0a0a0;border-top:none;border-bottom:none"></div>
<div class="hdr" style="left:242px;top:396px;width:418px"><div class="t">Preview</div></div>
<svg style="left:642px;top:402px" width="8" height="8" viewBox="0 0 8 8"><path d="M1.2 0.8L6.8 6.4M6.8 0.8L1.2 6.4" stroke="#fff" stroke-width="2" stroke-linecap="square"/></svg>
<div class="a" style="left:664px;top:51px;width:555px;height:685px;background:#fff;border-left:1px solid #a8a8a8"></div>
<div class="hdr" style="left:665px;top:51px;width:554px"><div class="t" style="left:1.5px">Edit properties of the Active Viewport Sun:</div></div>
<svg style="left:1204px;top:57px" width="8" height="8" viewBox="0 0 8 8"><path d="M1.2 0.8L6.8 6.4M6.8 0.8L1.2 6.4" stroke="#fff" stroke-width="2" stroke-linecap="square"/></svg>
<div class="a" style="left:665px;top:69px;width:554px;height:667px;background:#fff;border-left:1px solid #a0a0a0;border-top:1px solid #a0a0a0;border-bottom:1px solid #fff"></div>
<div class="a" style="left:666px;top:70px;width:553px;height:665px;background:#fff;border-left:1px solid #696969;border-top:1px solid #696969;border-bottom:1px solid #e3e3e3"></div>
<div class="a" style="left:667px;top:71px;width:551px;height:517px;background:#fff;border-right:1px solid #a0a0a0;border-bottom:1px solid #a4a6ae"></div>
<svg style="left:672px;top:77px" width="9" height="9" viewBox="0 0 9 9"><rect x="0.5" y="0.5" width="8" height="8" rx="1" fill="#f4f4f4" stroke="#8a8a8a"/><rect x="2" y="4" width="5" height="1" fill="#3b5ba8"/></svg>
<div class="t" style="left:688px;top:74px;font-weight:bold;letter-spacing:0.0px;">Sun</div>
<svg style="left:688px;top:95px" width="9" height="9" viewBox="0 0 9 9"><rect x="0.5" y="0.5" width="8" height="8" rx="1" fill="#f4f4f4" stroke="#8a8a8a"/><rect x="2" y="4" width="5" height="1" fill="#3b5ba8"/></svg>
<div class="t" style="left:704px;top:92px;font-weight:bold;letter-spacing:0.45px;">General</div>
<div class="a" style="left:700px;top:109px;width:1px;height:18px;background:#f0f0f0"></div>
<div class="a" style="left:869px;top:109px;width:1px;height:18px;background:#f0f0f0"></div>
<div class="a" style="left:700px;top:126px;width:517px;height:1px;background:#f0f0f0"></div>
<div class="a" style="left:700px;top:108px;width:517px;height:1px;background:#f0f0f0"></div>
<div class="t" style="left:704px;top:110px;letter-spacing:0.02px;">Status</div>
<div class="t" style="left:874px;top:110px;color:#000;letter-spacing:0.3px;">Off</div>
<div class="a" style="left:700px;top:127px;width:1px;height:18px;background:#f0f0f0"></div>
<div class="a" style="left:869px;top:127px;width:1px;height:18px;background:#f0f0f0"></div>
<div class="a" style="left:700px;top:144px;width:517px;height:1px;background:#f0f0f0"></div>
<div class="t" style="left:704px;top:128px;letter-spacing:0.253px;">Intensity factor</div>
<div class="t" style="left:874px;top:128px;color:#000;letter-spacing:0px;">1</div>
<div class="a" style="left:700px;top:145px;width:1px;height:18px;background:#f0f0f0"></div>
<div class="a" style="left:869px;top:145px;width:1px;height:18px;background:#f0f0f0"></div>
<div class="a" style="left:700px;top:162px;width:517px;height:1px;background:#f0f0f0"></div>
<div class="t" style="left:704px;top:146px;letter-spacing:-0.2px;">Shadows</div>
<div class="t" style="left:874px;top:146px;color:#000;letter-spacing:-0.3px;">On</div>
<svg style="left:688px;top:167px" width="9" height="9" viewBox="0 0 9 9"><rect x="0.5" y="0.5" width="8" height="8" rx="1" fill="#f4f4f4" stroke="#8a8a8a"/><rect x="2" y="4" width="5" height="1" fill="#3b5ba8"/></svg>
<div class="t" style="left:704px;top:164px;font-weight:bold;letter-spacing:0.237px;">Sun Angle Calculator</div>
<div class="a" style="left:700px;top:181px;width:1px;height:18px;background:#f0f0f0"></div>
<div class="a" style="left:869px;top:181px;width:1px;height:18px;background:#f0f0f0"></div>
<div class="a" style="left:700px;top:198px;width:517px;height:1px;background:#f0f0f0"></div>
<div class="a" style="left:700px;top:180px;width:517px;height:1px;background:#f0f0f0"></div>
<div class="t" style="left:704px;top:182px;letter-spacing:0.1px;">Date</div>
<div class="t" style="left:874px;top:182px;color:#000;letter-spacing:0.2px;">09/21/2011</div>
<div class="a" style="left:700px;top:199px;width:1px;height:18px;background:#f0f0f0"></div>
<div class="a" style="left:869px;top:199px;width:1px;height:18px;background:#f0f0f0"></div>
<div class="a" style="left:700px;top:216px;width:517px;height:1px;background:#f0f0f0"></div>
<div class="t" style="left:704px;top:200px;letter-spacing:-0.4px;">Time</div>
<div class="t" style="left:874px;top:200px;color:#000;letter-spacing:-0.15px;">15:00</div>
<div class="a" style="left:700px;top:217px;width:1px;height:18px;background:#f0f0f0"></div>
<div class="a" style="left:869px;top:217px;width:1px;height:18px;background:#f0f0f0"></div>
<div class="a" style="left:700px;top:234px;width:517px;height:1px;background:#f0f0f0"></div>
<div class="t" style="left:704px;top:218px;letter-spacing:-0.086px;">Daylight saving</div>
<div class="t" style="left:874px;top:218px;color:#000;letter-spacing:-0.5px;">No</div>
<div class="a" style="left:700px;top:235px;width:1px;height:18px;background:#f0f0f0"></div>
<div class="a" style="left:869px;top:235px;width:1px;height:18px;background:#f0f0f0"></div>
<div class="a" style="left:700px;top:252px;width:517px;height:1px;background:#f0f0f0"></div>
<div class="t" style="left:704px;top:236px;letter-spacing:-0.167px;">Azimuth</div>
<div class="t" style="left:874px;top:236px;color:#6d6d6d;letter-spacing:0.06px;">238.36</div>
<div class="a" style="left:700px;top:253px;width:1px;height:18px;background:#f0f0f0"></div>
<div class="a" style="left:869px;top:253px;width:1px;height:18px;background:#f0f0f0"></div>
<div class="a" style="left:700px;top:270px;width:517px;height:1px;background:#f0f0f0"></div>
<div class="t" style="left:704px;top:254px;letter-spacing:0.186px;">Altitude</div>
<div class="t" style="left:874px;top:254px;color:#6d6d6d;letter-spacing:0.0px;">34.84</div>
<div class="a" style="left:700px;top:271px;width:1px;height:18px;background:#f0f0f0"></div>
<div class="a" style="left:869px;top:271px;width:1px;height:18px;background:#f0f0f0"></div>
<div class="a" style="left:700px;top:288px;width:517px;height:1px;background:#f0f0f0"></div>
<div class="t" style="left:704px;top:272px;letter-spacing:-0.083px;">Source vector</div>
<div class="t" style="left:874px;top:272px;color:#6d6d6d;letter-spacing:0.312px;">-0.7, -0.43, 0.57</div>
<svg style="left:690px;top:275px" width="9" height="9" viewBox="0 0 9 9"><rect x="0.5" y="0.5" width="8" height="8" rx="1" fill="#f4f4f4" stroke="#8a8a8a"/><rect x="2" y="4" width="5" height="1" fill="#3b5ba8"/><rect x="4" y="2" width="1" height="5" fill="#3b5ba8"/></svg>
<svg style="left:688px;top:293px" width="9" height="9" viewBox="0 0 9 9"><rect x="0.5" y="0.5" width="8" height="8" rx="1" fill="#f4f4f4" stroke="#8a8a8a"/><rect x="2" y="4" width="5" height="1" fill="#3b5ba8"/></svg>
<div class="t" style="left:704px;top:290px;font-weight:bold;letter-spacing:0.386px;">Rendered Shadow Details</div>
<div class="a" style="left:700px;top:307px;width:1px;height:18px;background:#f0f0f0"></div>
<div class="a" style="left:869px;top:307px;width:1px;height:18px;background:#f0f0f0"></div>
<div class="a" style="left:700px;top:324px;width:517px;height:1px;background:#f0f0f0"></div>
<div class="a" style="left:700px;top:306px;width:517px;height:1px;background:#f0f0f0"></div>
<div class="t" style="left:704px;top:308px;letter-spacing:0.0px;">Type</div>
<div class="t" style="left:874px;top:308px;color:#000;letter-spacing:0.01px;">Soft (area)</div>
<div class="a" style="left:700px;top:325px;width:1px;height:18px;background:#f0f0f0"></div>
<div class="a" style="left:869px;top:325px;width:1px;height:18px;background:#f0f0f0"></div>
<div class="a" style="left:700px;top:342px;width:517px;height:1px;background:#f0f0f0"></div>
<div class="t" style="left:704px;top:326px;letter-spacing:-0.129px;">Softness</div>
<div class="t" style="left:874px;top:326px;color:#000;letter-spacing:0px;">1</div>
<div class="t" style="left:682px;top:607px;font-weight:bold;letter-spacing:0.32px">Geographic Location</div>
<div class="a" style="left:808px;top:604px;width:22px;height:22px;border:1px solid #adadad;background:#f5f5f5"></div>
<svg style="left:811px;top:607px" width="16" height="16" viewBox="0 0 16 16"><defs><radialGradient id="gg" cx="0.35" cy="0.4" r="0.75"><stop offset="0" stop-color="#f4f6f8"/><stop offset="0.6" stop-color="#d9dee3"/><stop offset="1" stop-color="#aeb5bd"/></radialGradient></defs><circle cx="8" cy="8" r="7.4" fill="url(#gg)" stroke="#55595d" stroke-width="1.3"/><path d="M3.8 2.6C5.5 1.6 8.2 1.6 10.2 2.4L10.3 4.6L8.8 6.2L8 8.8L6.6 7.4L5.6 5.2Z" fill="#55595d"/><path d="M8.6 9.2L12 9.6L13 11.2L10.6 14.2L9.8 12.2Z" fill="#55595d"/></svg>
<div class="t" style="left:640px;top:651px;width:100.28px;text-align:right;letter-spacing:-0.28px">Time Zone:</div>
<div class="t" style="left:750px;top:651px;letter-spacing:-0.196px">(GMT-08:00) Pacific Time (US &amp; Canada); Tijuana</div>
<div class="t" style="left:640px;top:675px;width:99.71px;text-align:right;letter-spacing:0.29px">Latitude:</div>
<div class="t" style="left:751px;top:675px;letter-spacing:0.08px">37.7950 North</div>
<div class="t" style="left:640px;top:699px;width:100.00px;text-align:right;letter-spacing:0px">Longitude:</div>
<div class="t" style="left:751px;top:699px;letter-spacing:0px">122.3940 West</div>
<div class="a" style="left:1px;top:736px;width:1218px;height:1px;background:#a0a0a0"></div>
<div class="a" style="left:660px;top:736px;width:4px;height:1px;background:#d4d4d4"></div>
<div class="a" style="left:238px;top:736px;width:4px;height:1px;background:#d4d4d4"></div>
<div class="a" style="left:1px;top:51px;width:1px;height:685px;background:rgba(0,0,0,0.33)"></div>
</body></html>
